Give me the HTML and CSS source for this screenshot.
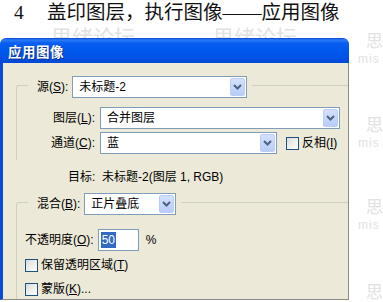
FILE: index.html
```html
<!DOCTYPE html>
<html>
<head>
<meta charset="utf-8">
<link rel="stylesheet" href="styles.css">
</head>
<body>
<div class="page">
  <div class="wm wm-top wm-a">思绪论坛</div>
  <div class="wm wm-top wm-b">思绪论坛</div>
  <div class="wm wm-side s1"><span class="wm-big">思</span><span class="wm-small">mis</span></div>
  <div class="wm wm-side s2"><span class="wm-big">思</span><span class="wm-small">mis</span></div>
  <div class="wm wm-side s3"><span class="wm-big">思</span><span class="wm-small">mis</span></div>
  <div class="wm wm-side s4"><span class="wm-big">思</span></div>

  <p class="caption"><span class="num">4</span>盖印图层，执行图像——应用图像</p>

  <div class="dialog">
    <div class="titlebar">应用图像</div>
    <div class="body">
      <div class="group g1">
        <div class="legend">
          <span class="lbl">源(<u>S</u>):</span>
          <div class="combo c-src">未标题-2<span class="drop"><svg width="9" height="6" viewBox="0 0 9 6"><path d="M1 1 L4.5 4.5 L8 1" fill="none" stroke="#4D6185" stroke-width="2"/></svg></span></div>
        </div>
        <div class="grid">
          <span class="lbl r">图层(<u>L</u>):</span>
          <div class="combo c-layer">合并图层<span class="drop"><svg width="9" height="6" viewBox="0 0 9 6"><path d="M1 1 L4.5 4.5 L8 1" fill="none" stroke="#4D6185" stroke-width="2"/></svg></span></div>
          <span class="lbl r">通道(<u>C</u>):</span>
          <div class="chanrow">
            <div class="combo c-chan">蓝<span class="drop"><svg width="9" height="6" viewBox="0 0 9 6"><path d="M1 1 L4.5 4.5 L8 1" fill="none" stroke="#4D6185" stroke-width="2"/></svg></span></div>
            <span class="check"></span><span class="lbl">反相(<u>I</u>)</span>
          </div>
        </div>
      </div>

      <div class="target">目标:&nbsp; 未标题-2(图层 1, RGB)</div>

      <div class="group g2">
        <div class="legend">
          <span class="lbl">混合(<u>B</u>):</span>
          <div class="combo c-blend">正片叠底<span class="drop"><svg width="9" height="6" viewBox="0 0 9 6"><path d="M1 1 L4.5 4.5 L8 1" fill="none" stroke="#4D6185" stroke-width="2"/></svg></span></div>
        </div>
        <div class="opac">
          <span class="lbl">不透明度(<u>O</u>):</span>
          <div class="input"><span class="sel">50</span></div>
          <span class="lbl pct">%</span>
        </div>
        <div class="cbrow"><span class="check"></span><span class="lbl">保留透明区域(<u>T</u>)</span></div>
        <div class="cbrow"><span class="check"></span><span class="lbl">蒙版(<u>K</u>)...</span></div>
      </div>
    </div>
  </div>
</div>
</body>
</html>
```

FILE: styles.css
```css
html, body {
  margin: 0;
  padding: 0;
  background: #fff;
}
.page {
  position: relative;
  width: 383px;
  height: 302px;
  overflow: hidden;
  font-family: "Liberation Sans", "Noto Sans CJK SC", sans-serif;
  font-size: 12px;
  color: #000;
}
.wm {
  position: absolute;
  color: #e2e2e2;
  font-family: "Noto Sans CJK SC", sans-serif;
  font-size: 21px;
  white-space: nowrap;
}
.wm-top {
  top: 26px;
  height: 12px;
  line-height: 21px;
  overflow: hidden;
}
.wm-a { left: 51px; }
.wm-b { left: 213px; }
.wm-side { left: 366px; display: flex; flex-direction: column; line-height: 20px; }
.wm-big { font-size: 17px; line-height: 20px; }
.wm-small { font-family: "Liberation Sans", sans-serif; font-size: 12px; line-height: 12px; margin-left: -8px; letter-spacing: 1px; margin-top: 3px; }
.s1 { top: 30px; }
.s2 { top: 114px; }
.s3 { top: 196px; }
.s4 { top: 281px; }

.caption {
  position: relative;
  margin: 0;
  padding: 2px 0 0 14px;
  box-sizing: border-box;
  height: 38px;
  font-family: "Liberation Serif", "Noto Sans CJK SC", serif;
  font-size: 19.5px;
  line-height: 22px;
  color: #111;
}
.num { display: inline-block; width: 33px; }

.dialog {
  position: relative;
  width: 349px;
}
.titlebar {
  height: 25px;
  box-sizing: border-box;
  padding: 6px 0 0 8px;
  background: linear-gradient(#0846cf 0px, #2c7cf6 2px, #0a5ef0 5px, #0058ee 12px, #0052e6 20px, #0048d2 25px);
  border-radius: 6px 6px 0 0;
  color: #fff;
  font-family: "Noto Sans CJK SC", sans-serif;
  font-weight: bold;
  font-size: 13.5px;
  line-height: 15px;
  letter-spacing: 0.5px;
  text-shadow: 1px 1px 0 #0a2a8a;
}
.body {
  height: 237px;
  box-sizing: border-box;
  background: #ECE9D8;
  border-left: 3px solid #0b4ad8;
  border-right: 1px solid #8c8c84;
  border-bottom: 1px solid #8c8c84;
  padding: 22px 0 0 13px;
  overflow: hidden;
}
.group {
  border-top: 1px solid #D0D0BF;
  border-left: 1px solid #D0D0BF;
  border-top-left-radius: 3px;
}
.legend {
  display: flex;
  align-items: center;
  width: max-content;
  margin: -10px 0 0 11px;
  padding: 0 5px 0 9px;
  background: #ECE9D8;
  gap: 4px;
}
.lbl { line-height: 14px; white-space: nowrap; }
.lbl u { text-decoration: underline; text-underline-offset: 1px; }
.combo {
  position: relative;
  height: 22px;
  box-sizing: border-box;
  border: 1px solid #7F9DB9;
  background: #fff;
  padding-left: 6px;
  line-height: 20px;
  white-space: nowrap;
}
.drop {
  position: absolute;
  right: 1px;
  top: 1px;
  bottom: 1px;
  width: 15px;
  box-sizing: border-box;
  border: 1px solid #BACCF7;
  border-radius: 2px;
  background: linear-gradient(#D4E0FC, #B9CDF8);
  display: flex;
  align-items: center;
  justify-content: center;
}
.c-src { width: 175px; }
.c-layer { width: 240px; }
.c-chan { width: 177px; }
.c-blend { width: 92px; }
.g1 { height: 74px; }
.grid {
  display: grid;
  grid-template-columns: 78px auto;
  column-gap: 5px;
  row-gap: 3px;
  align-items: center;
  margin-top: 9px;
}
.r { text-align: right; }
.chanrow { display: flex; align-items: center; }
.chanrow .check { margin: 0 3px 0 9px; }
.check {
  display: inline-block;
  width: 13px;
  height: 13px;
  box-sizing: border-box;
  border: 1px solid #1C5180;
  background: linear-gradient(135deg, #DCDCD7, #fff);
}
.target {
  padding: 10px 0 0 52px;
  height: 42px;
  box-sizing: border-box;
  line-height: 14px;
}
.g2 { height: 110px; }
.opac {
  display: flex;
  align-items: center;
  margin: 14px 0 0 8px;
}
.input {
  width: 41px;
  height: 22px;
  box-sizing: border-box;
  border: 1px solid #7F9DB9;
  background: #fff;
  margin-left: 4px;
  padding: 2px 0 0 2px;
}
.sel {
  display: inline-block;
  background: #316AC5;
  color: #fff;
  line-height: 16px;
  padding: 0 1px;
}
.pct { margin-left: 7px; }
.cbrow {
  display: flex;
  align-items: center;
  gap: 3px;
  margin: 7px 0 0 8px;
}
.cbrow + .cbrow { margin-top: 10px; }
```
